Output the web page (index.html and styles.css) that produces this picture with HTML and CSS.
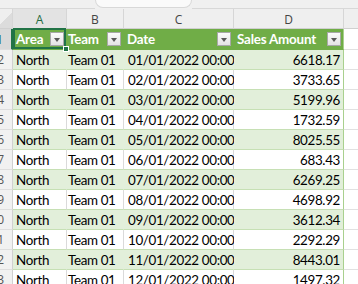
FILE: index.html
```html
<!DOCTYPE html>
<html>
<head>
<meta charset="utf-8">
<link rel="stylesheet" href="styles.css">
</head>
<body>
<div class="topbar"><div class="gap"></div><div class="tab"></div><div class="fill"></div></div>
<div class="sheet">
  <div class="row colhead">
    <div class="corner"></div>
    <div class="ch sel">A</div>
    <div class="ch">B</div>
    <div class="ch">C</div>
    <div class="ch">D</div>
    <div class="ch last"></div>
  </div>
  <div class="row thead">
    <div class="rh rsel">1</div>
    <div class="th active"><span>Area</span><span class="dd"></span><span class="handle"></span></div>
    <div class="th"><span>Team</span><span class="dd"></span></div>
    <div class="th"><span>Date</span><span class="dd"></span></div>
    <div class="th thd"><span>Sales Amount</span><span class="dd"></span></div>
    <div class="out"></div>
  </div>
  <div class="row band"><div class="rh">2</div><div class="td">North</div><div class="td">Team 01</div><div class="td">01/01/2022 00:00</div><div class="td num">6618.17</div><div class="out"></div></div>
  <div class="row"><div class="rh">3</div><div class="td">North</div><div class="td">Team 01</div><div class="td">02/01/2022 00:00</div><div class="td num">3733.65</div><div class="out"></div></div>
  <div class="row band"><div class="rh">4</div><div class="td">North</div><div class="td">Team 01</div><div class="td">03/01/2022 00:00</div><div class="td num">5199.96</div><div class="out"></div></div>
  <div class="row"><div class="rh">5</div><div class="td">North</div><div class="td">Team 01</div><div class="td">04/01/2022 00:00</div><div class="td num">1732.59</div><div class="out"></div></div>
  <div class="row band"><div class="rh">6</div><div class="td">North</div><div class="td">Team 01</div><div class="td">05/01/2022 00:00</div><div class="td num">8025.55</div><div class="out"></div></div>
  <div class="row"><div class="rh">7</div><div class="td">North</div><div class="td">Team 01</div><div class="td">06/01/2022 00:00</div><div class="td num">683.43</div><div class="out"></div></div>
  <div class="row band"><div class="rh">8</div><div class="td">North</div><div class="td">Team 01</div><div class="td">07/01/2022 00:00</div><div class="td num">6269.25</div><div class="out"></div></div>
  <div class="row"><div class="rh">9</div><div class="td">North</div><div class="td">Team 01</div><div class="td">08/01/2022 00:00</div><div class="td num">4698.92</div><div class="out"></div></div>
  <div class="row band"><div class="rh">10</div><div class="td">North</div><div class="td">Team 01</div><div class="td">09/01/2022 00:00</div><div class="td num">3612.34</div><div class="out"></div></div>
  <div class="row"><div class="rh">11</div><div class="td">North</div><div class="td">Team 01</div><div class="td">10/01/2022 00:00</div><div class="td num">2292.29</div><div class="out"></div></div>
  <div class="row band"><div class="rh">12</div><div class="td">North</div><div class="td">Team 01</div><div class="td">11/01/2022 00:00</div><div class="td num">8443.01</div><div class="out"></div></div>
  <div class="row"><div class="rh">13</div><div class="td">North</div><div class="td">Team 01</div><div class="td">12/01/2022 00:00</div><div class="td num">1497.32</div><div class="out"></div></div>
</div>
</body>
</html>
```
FILE: styles.css
```css
html, body {
  margin: 0;
  padding: 0;
  background: #ffffff;
  overflow: hidden;
}
body {
  font-family: Lato, "Liberation Sans", sans-serif;
  font-size: 13.4px;
  letter-spacing: -0.35px;
  color: #000;
}
.topbar {
  height: 9px;
  display: flex;
  background: #f0f0f0;
}
.topbar .gap { width: 95px; border-bottom: 1px solid #d8d8d8; box-sizing: border-box; }
.topbar .tab {
  width: 97px;
  background: #fafafa;
  border: 1px solid #d8d8d8;
  border-top: none;
  border-radius: 0 0 9px 9px;
  box-sizing: border-box;
  height: 8px;
}
.topbar .fill { flex: 1; border-bottom: 1px solid #d8d8d8; box-sizing: border-box; }

.row {
  display: grid;
  grid-template-columns: 13px 54px 57px 110px 110px 1fr;
  height: 20px;
}
.row > div {
  box-sizing: border-box;
  border-right: 1px solid #dadada;
  border-bottom: 1px solid #dadada;
  display: flex;
  align-items: center;
  white-space: nowrap;
  overflow: visible;
}
.colhead > div {
  background: #efefef;
  border-right-color: #d6d6d6;
  border-bottom-color: #d0d0d0;
  justify-content: center;
  font-family: "Open Sans", "Liberation Sans", sans-serif;
  font-size: 12px;
  letter-spacing: 0;
  color: #444;
  padding-top: 1px;
}
.colhead .ch.sel { background: #e3e3e3; color: #1e6b40; }
.colhead .ch.last { border-right: none; }
.colhead .corner {
  background: linear-gradient(135deg, #efefef 0 50%, #dcdcdc 50% 100%);
}
.rh {
  background: #f1f1f1;
  border-right-color: #d0d0d0 !important;
  border-bottom-color: #dedede !important;
  justify-content: flex-end;
  padding-right: 8px;
  font-family: "Open Sans", "Liberation Sans", sans-serif;
  font-size: 12px;
  letter-spacing: 0;
  color: #555;
  overflow: hidden !important;
}
.rh.rsel { background: #d9d9d9; color: #1e6b40; border-right: 2px solid #217346 !important; }

.thead { height: 21px; }
.thead .th {
  background: #70ad47;
  border-right-color: #70ad47;
  border-bottom-color: #70ad47;
  color: #ffffff;
  font-weight: bold;
  letter-spacing: -0.2px;
  justify-content: space-between;
  padding: 0 2px 0 3px;
  position: relative;
}
.thead .th:nth-child(3) { padding-left: 1px; }
.thead .th.thd { border-right-color: #a9d08e; }
.dd {
  width: 14px;
  height: 14px;
  box-sizing: border-box;
  border: 1px solid #a8a8a8;
  background: linear-gradient(#fbfbfb, #e4e4e4);
  display: flex;
  align-items: center;
  justify-content: center;
  flex: none;
}
.dd::after {
  content: "";
  border-left: 3.5px solid transparent;
  border-right: 3.5px solid transparent;
  border-top: 4px solid #595959;
  margin-top: 1px;
}
.th.active::after {
  content: "";
  position: absolute;
  top: -1px;
  left: 0;
  right: 0;
  bottom: 0;
  border: 2px solid #217346;
  pointer-events: none;
}
.handle {
  position: absolute;
  right: -3px;
  bottom: -3px;
  width: 6px;
  height: 6px;
  background: #217346;
  border: 1px solid #ffffff;
  box-sizing: border-box;
  z-index: 2;
}
.out { background: #ffffff; border-right: none !important; border-bottom-color: #e1e1e1 !important; }

.td {
  padding: 0 3px;
  border-bottom-color: #c6e0b4 !important;
  background: #ffffff;
}
.row .td:nth-child(3) { padding-left: 1px; }
.row .td:nth-child(4) { padding-left: 4px; }
.td.num { justify-content: flex-end; padding-right: 3px; border-right-color: #a9d08e !important; }
.band .td { background: #e2efda; border-right-color: #e2efda; }
.band .td.num { border-right-color: #a9d08e; }
```
